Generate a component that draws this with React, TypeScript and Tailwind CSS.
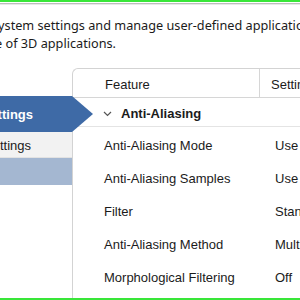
import React from "react"

type Row = {
  feature: string
  setting: string
}

const rows: Row[] = [
  { feature: "Anti-Aliasing Mode", setting: "Use application settings" },
  { feature: "Anti-Aliasing Samples", setting: "Use application settings" },
  { feature: "Filter", setting: "Standard" },
  { feature: "Anti-Aliasing Method", setting: "Multisampling" },
  { feature: "Morphological Filtering", setting: "Off" },
]

export default function App() {
  return (
    <div
      className="w-[300px] h-[300px] overflow-hidden bg-white flex flex-col text-[#1b1b1b]"
      style={{ fontFamily: '"Liberation Sans", Arial, sans-serif' }}
    >
      {/* window edge */}
      <div className="h-[2px] bg-[#39e639] shrink-0" />
      <div className="h-[1px] mt-[1px] bg-[#bcbcbc] shrink-0" />
      <div className="h-[1px] bg-[#e8e8e8] shrink-0" />

      {/* description */}
      <div
        className="pt-[11px] text-[12.7px] leading-[18px] shrink-0"
        style={{ fontFamily: '"Noto Sans", "Liberation Sans", sans-serif' }}
      >
        <div className="whitespace-nowrap ml-[-8px]">
          system settings and manage user-defined application profiles
        </div>
        <div className="flex justify-end w-[116px]">
          <span className="whitespace-nowrap">quality and performance of 3D applications.</span>
        </div>
      </div>

      <div className="flex flex-1 mt-[16px] min-h-0">
        {/* left nav */}
        <div className="w-[72px] shrink-0 pt-[28px] text-[13px]">
          <div className="relative h-[36px] bg-[#3e6aa6] text-white font-bold flex items-center pt-[1px]">
            <div className="flex justify-end w-[33px]">
              <span className="whitespace-nowrap">Global Settings</span>
            </div>
            <svg
              className="absolute left-[72px] top-0 z-10"
              width="21"
              height="36"
              viewBox="0 0 21 36"
            >
              <polygon points="0,0 21,18 0,36" fill="#3e6aa6" />
            </svg>
          </div>
          <div className="h-[26px] bg-[#f2f2f2] border-b border-[#e2e2e2] flex items-center pt-[2px]">
            <div className="flex justify-end w-[31px]">
              <span className="whitespace-nowrap">Program Settings</span>
            </div>
          </div>
          <div className="h-[27px] bg-[#a4b7d1]" />
        </div>

        {/* feature table */}
        <div className="flex-1 border-l border-t border-[#d3d3d3] rounded-tl-[6px] text-[13px]">
          <div className="h-[29px] flex border-b border-[#d6d6d6]">
            <div className="w-[187px] pl-[32px] pt-[3px] flex items-center border-r border-[#d6d6d6]">
              Feature
            </div>
            <div className="flex-1 pl-[11px] pt-[3px] flex items-center whitespace-nowrap">Settings</div>
          </div>

          <div className="h-[29px] flex items-center border-b border-[#e4e4e4] pl-[30px] pt-[3px] gap-[9px] font-bold">
            <svg width="9" height="6" viewBox="0 0 9 6" fill="none">
              <path d="M1 1 L4.5 4.5 L8 1" stroke="#555" strokeWidth="1.2" />
            </svg>
            <span>Anti-Aliasing</span>
          </div>

          {rows.map((row) => (
            <div key={row.feature} className="h-[33px] flex items-center pt-[5px]">
              <div className="w-[188px] pl-[31px] whitespace-nowrap">{row.feature}</div>
              <div className="flex-1 pl-[14px] whitespace-nowrap">{row.setting}</div>
            </div>
          ))}
        </div>
      </div>

      <div className="h-[2px] bg-[#39e639] shrink-0" />
    </div>
  )
}
